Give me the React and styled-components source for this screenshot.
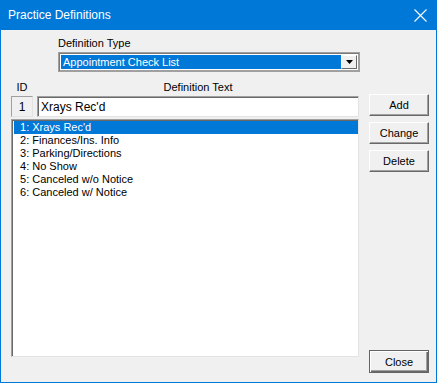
import React from 'react'
import styled, { createGlobalStyle } from 'styled-components'

const GlobalStyle = createGlobalStyle`
  html, body {
    margin: 0;
    padding: 0;
    background: #f0f0f0;
  }
  * {
    box-sizing: border-box;
  }
`

const Window = styled.div`
  width: 437px;
  height: 383px;
  display: flex;
  flex-direction: column;
  border: 1px solid #0078d7;
  border-top: none;
  background: #f0f0f0;
  font-family: "Liberation Sans", Arial, sans-serif;
  font-size: 11px;
  color: #000;
`

const TitleBar = styled.div`
  height: 30px;
  flex-shrink: 0;
  display: flex;
  align-items: center;
  justify-content: space-between;
  background: #0078d7;
  color: #fff;
  font-size: 12px;
  padding: 0 9px 0 8px;
  margin: 0 -1px;
`

const CloseX = styled.svg`
  width: 13px;
  height: 13px;
  margin-right: 1px;
`

const Body = styled.div`
  flex: 1;
  display: flex;
  flex-direction: column;
  padding: 6px 8px 9px 10px;
`

const TypeSection = styled.div`
  display: flex;
  flex-direction: column;
  gap: 2px;
  margin-left: 47px;
  width: 302px;
`

const Label = styled.div`
  line-height: 14px;
  text-align: ${p => p.$center ? 'center' : 'left'};
  flex: ${p => p.$grow ? 1 : 'none'};
  width: ${p => p.$width || 'auto'};
`

const Combo = styled.div`
  height: 20px;
  display: flex;
  align-items: stretch;
  padding: 2px;
  border: 1px solid #a0a0a0;
  box-shadow: inset 1px 1px 0 #7a7a7a, inset -1px -1px 0 #a0a0a0;
  background: #fff;
`

const ComboValue = styled.div`
  flex: 1;
  background: #0078d7;
  color: #fff;
  padding-left: 2px;
  line-height: 14px;
`

const ComboButton = styled.div`
  width: 16px;
  display: flex;
  align-items: center;
  justify-content: center;
  background: #f0f0f0;
  border-top: 1px solid #fff;
  border-left: 1px solid #fff;
  border-right: 1px solid #696969;
  border-bottom: 1px solid #696969;
`

const Main = styled.div`
  flex: 1;
  display: grid;
  grid-template-columns: 348px 60px;
  column-gap: 10px;
  margin-top: 8px;
`

const LeftColumn = styled.div`
  display: flex;
  flex-direction: column;
  gap: 2px;
`

const Row = styled.div`
  display: flex;
  gap: ${p => p.$gap || 0}px;
`

const IdBox = styled.div`
  width: 22px;
  height: 21px;
  display: flex;
  align-items: center;
  justify-content: center;
  border: 1px solid #a0a0a0;
  border-right-color: #e3e3e3;
  border-bottom-color: #e3e3e3;
  background: #f0f0f0;
  font-size: 12px;
`

const TextInput = styled.div`
  flex: 1;
  height: 21px;
  display: flex;
  align-items: center;
  padding-left: 3px;
  background: #fff;
  border-top: 1px solid #a0a0a0;
  border-left: 1px solid #a0a0a0;
  border-right: 1px solid #e3e3e3;
  border-bottom: 1px solid #e3e3e3;
  box-shadow: inset 1px 1px 0 #696969;
  font-size: 12px;
`

const ListBox = styled.div`
  flex: 1;
  margin-bottom: 16px;
  background: #fff;
  border-top: 1px solid #a0a0a0;
  border-left: 1px solid #a0a0a0;
  border-right: 1px solid #e3e3e3;
  border-bottom: 1px solid #e3e3e3;
  box-shadow: inset 1px 1px 0 #696969;
  padding: 1px 0 0 2px;
`

const ListItem = styled.div`
  height: 13px;
  line-height: 13px;
  padding-left: 6px;
  background: ${p => p.$selected ? '#0078d7' : 'transparent'};
  color: ${p => p.$selected ? '#fff' : '#000'};
`

const RightColumn = styled.div`
  display: flex;
  flex-direction: column;
  gap: 6px;
  padding-top: 14px;
`

const Button = styled.div`
  height: 22px;
  display: flex;
  align-items: center;
  justify-content: center;
  background: #f0f0f0;
  border-top: 1px solid #fff;
  border-left: 1px solid #fff;
  border-right: 1px solid #696969;
  border-bottom: 1px solid #696969;
  box-shadow: inset -1px -1px 0 #a0a0a0;
  margin-top: ${p => p.$push ? 'auto' : '0'};
  ${p => p.$default && `
    height: 23px;
    border: 1px solid #646464;
    box-shadow: inset 1px 1px 0 #fff, inset -1px -1px 0 #696969, inset -2px -2px 0 #a0a0a0;
  `}
`

const items = [
  'Xrays Rec\'d',
  'Finances/Ins. Info',
  'Parking/Directions',
  'No Show',
  'Canceled w/o Notice',
  'Canceled w/ Notice',
]

export default function App() {
  return (
    <>
      <GlobalStyle />
      <Window>
        <TitleBar>
          <span>Practice Definitions</span>
          <CloseX viewBox="0 0 13 13">
            <path d="M0.5 0.5 L12.5 12.5 M12.5 0.5 L0.5 12.5" stroke="#fff" strokeWidth="1.1" />
          </CloseX>
        </TitleBar>
        <Body>
          <TypeSection>
            <Label>Definition Type</Label>
            <Combo>
              <ComboValue>Appointment Check List</ComboValue>
              <ComboButton>
                <svg width="7" height="4" viewBox="0 0 7 4">
                  <path d="M0 0 H7 L3.5 4 Z" fill="#000" />
                </svg>
              </ComboButton>
            </Combo>
          </TypeSection>
          <Main>
            <LeftColumn>
              <Row $gap={4}>
                <Label $width="22px" $center>ID</Label>
                <Label $grow $center>Definition Text</Label>
              </Row>
              <Row $gap={4}>
                <IdBox>1</IdBox>
                <TextInput>Xrays Rec'd</TextInput>
              </Row>
              <ListBox>
                {items.map((t, i) => (
                  <ListItem key={t} $selected={i === 0}>{i + 1}: {t}</ListItem>
                ))}
              </ListBox>
            </LeftColumn>
            <RightColumn>
              <Button>Add</Button>
              <Button>Change</Button>
              <Button>Delete</Button>
              <Button $push $default>Close</Button>
            </RightColumn>
          </Main>
        </Body>
      </Window>
    </>
  )
}
